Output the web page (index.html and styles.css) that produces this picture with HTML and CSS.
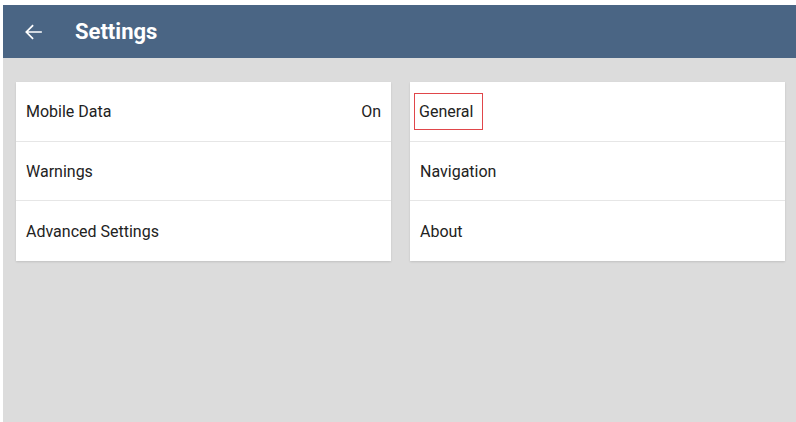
FILE: index.html
```html
<!DOCTYPE html>
<html lang="en">
<head>
<meta charset="utf-8">
<title>Settings</title>
<link rel="stylesheet" href="styles.css">
</head>
<body>
<div class="app">
  <header class="topbar">
    <svg class="back" width="18" height="16" viewBox="0 0 18 16" aria-hidden="true">
      <path d="M17 8H2.5M8.5 1.8L2.3 8l6.2 6.2" fill="none" stroke="#fff" stroke-width="1.7" stroke-linecap="square" stroke-linejoin="miter"/>
    </svg>
    <h1 class="title">Settings</h1>
  </header>
  <main class="content">
    <section class="card">
      <div class="row"><span>Mobile Data</span><span class="value">On</span></div>
      <div class="row"><span>Warnings</span></div>
      <div class="row"><span>Advanced Settings</span></div>
    </section>
    <section class="card">
      <div class="row"><span class="highlight">General</span></div>
      <div class="row"><span>Navigation</span></div>
      <div class="row"><span>About</span></div>
    </section>
  </main>
</div>
</body>
</html>
```
FILE: styles.css
```css
html, body {
  margin: 0;
  padding: 0;
  background: #ffffff;
}
body {
  padding: 5px 0 0 3px;
  height: 422px;
  box-sizing: border-box;
  overflow: hidden;
  font-family: Roboto, "Liberation Sans", sans-serif;
}
.app {
  display: flex;
  flex-direction: column;
  height: 417px;
  background: #dcdcdc;
}
.topbar {
  height: 53px;
  flex: none;
  background: #4a6584;
  display: flex;
  align-items: center;
  padding-left: 21px;
  color: #ffffff;
}
.back {
  display: block;
}
.title {
  margin: 0 0 0 33px;
  font-size: 22px;
  font-weight: 700;
}
.content {
  display: grid;
  grid-template-columns: 1fr 1fr;
  column-gap: 19px;
  align-items: start;
  padding: 24px 11px 0 13px;
}
.card {
  background: #ffffff;
  box-shadow: 0 1px 2px rgba(0, 0, 0, 0.12);
  display: flex;
  flex-direction: column;
}
.row {
  height: 59px;
  box-sizing: border-box;
  display: flex;
  align-items: center;
  justify-content: space-between;
  padding: 0 10px;
  font-size: 16px;
  color: #222222;
  border-bottom: 1px solid #e6e6e6;
}
.row:first-child {
  height: 60px;
}
.row:last-child {
  border-bottom: none;
  height: 60px;
}
.highlight {
  display: inline-block;
  margin-left: -6px;
  padding: 8px 9px 8px 4px;
  border: 1px solid #e0464a;
}
```
